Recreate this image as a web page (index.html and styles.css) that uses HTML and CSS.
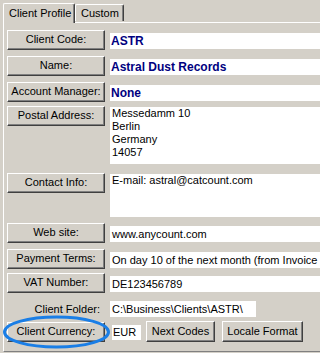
FILE: index.html
```html
<!DOCTYPE html>
<html lang="en">

<head>
    <meta charset="UTF-8" />
    <meta name="viewport" content="width=device-width, initial-scale=1" />
    <title>Client Profile</title>
    <link rel="stylesheet" href="styles.css">
</head>

<body>
    <div class="window">
        <div class="tabs">
            <div class="tab tab-active">Client Profile</div>
            <div class="tab">Custom</div>
        </div>

        <div class="panel">
            <div class="row row-26">
                <div class="label-btn">Client Code:</div>
                <div class="field field-strong">ASTR</div>
            </div>
            <div class="row row-26">
                <div class="label-btn">Name:</div>
                <div class="field field-strong">Astral Dust Records</div>
            </div>
            <div class="row row-24">
                <div class="label-btn">Account Manager:</div>
                <div class="field field-strong">None</div>
            </div>
            <div class="row row-postal">
                <div class="label-btn">Postal Address:</div>
                <div class="field field-multi field-postal">
                    Messedamm 10<br>Berlin<br>Germany<br>14057
                </div>
            </div>
            <div class="row row-contact">
                <div class="label-btn">Contact Info:</div>
                <div class="field field-multi field-contact">E-mail: astral@catcount.com</div>
            </div>
            <div class="row row-26">
                <div class="label-btn">Web site:</div>
                <div class="field">www.anycount.com</div>
            </div>
            <div class="row row-24">
                <div class="label-btn">Payment Terms:</div>
                <div class="field">On day 10 of the next month (from Invoice date)</div>
            </div>
            <div class="row row-25">
                <div class="label-btn">VAT Number:</div>
                <div class="field">DE123456789</div>
            </div>
            <div class="row row-24">
                <div class="label-plain">Client Folder:</div>
                <div class="field field-folder">C:\Business\Clients\ASTR\</div>
            </div>
            <div class="row row-last">
                <div class="label-btn label-currency">Client Currency:</div>
                <div class="field field-eur">EUR</div>
                <div class="push-btn btn-next">Next Codes</div>
                <div class="push-btn btn-locale">Locale Format</div>
            </div>
        </div>

        <svg class="highlight" width="320" height="353" viewBox="0 0 320 353">
            <ellipse cx="56.5" cy="332" rx="52" ry="15" fill="none" stroke="#1a7ee6" stroke-width="3" />
        </svg>
    </div>
</body>
</html>
```

FILE: styles.css
```css
:root {
    --face: #d4d0c8;
    --shadow: #808080;
    --dark: #404040;
    --navy: #000080;
}

* {
    margin: 0;
    padding: 0;
    box-sizing: border-box;
}

body {
    font-family: 'Liberation Sans', Arial, sans-serif;
    font-size: 11px;
    color: black;
    background-color: var(--face);
    overflow: hidden;
}

.window {
    position: relative;
    width: 320px;
    height: 353px;
    overflow: hidden;
    background-color: var(--face);
}

.tabs {
    display: flex;
    align-items: flex-end;
    height: 22px;
    padding: 2px 0 0 3px;
    position: relative;
    z-index: 1;
}

.tab {
    height: 17px;
    margin-bottom: 1px;
    padding: 0 4px 0 5px;
    border: 1px solid white;
    border-bottom: none;
    border-right-color: var(--dark);
    border-radius: 2px 2px 0 0;
    box-shadow: inset -1px 0 var(--shadow);
    line-height: 16px;
    white-space: nowrap;
    background-color: var(--face);
}

.tab-active {
    height: 20px;
    margin-bottom: -1px;
    width: 72px;
    padding: 0 0 0 5px;
    line-height: 18px;
}

.panel {
    margin-left: 3px;
    height: 330px;
    padding: 7px 0 0 3px;
    border-top: 1px solid white;
    border-left: 1px solid white;
    border-bottom: 1px solid var(--shadow);
    display: flex;
    flex-direction: column;
}

.row {
    display: flex;
    align-items: flex-start;
    flex-shrink: 0;
}

.row-24 { height: 24px; }
.row-25 { height: 25px; }
.row-26 { height: 26px; }
.row-postal { height: 67px; }
.row-contact { height: 50px; }
.row-last { height: 22px; margin-top: -1px; }

.label-btn,
.push-btn {
    flex-shrink: 0;
    height: 20px;
    border: 1px solid;
    border-color: white var(--dark) var(--dark) white;
    box-shadow: inset -1px -1px var(--shadow);
    background-color: var(--face);
    text-align: center;
    line-height: 17px;
    white-space: nowrap;
}

.label-btn {
    width: 98px;
}

.label-currency {
    margin-top: 1px;
}

.label-plain {
    width: 98px;
    padding-right: 5px;
    text-align: right;
    line-height: 20px;
    margin-top: 1px;
}

.field {
    flex: 1;
    min-width: 0;
    height: 16px;
    margin: 3px 0 0 5px;
    padding-left: 2px;
    background-color: white;
    line-height: 16px;
    white-space: nowrap;
    overflow: hidden;
}

.field-strong {
    color: var(--navy);
    font-weight: 700;
    font-size: 12px;
    padding-left: 1px;
}

.field-multi {
    margin-top: 1px;
    line-height: 13px;
}

.field-postal {
    height: 57px;
}

.field-contact {
    height: 43px;
}

.field-folder {
    flex: none;
    width: 146px;
}

.field-eur {
    flex: none;
    width: 29px;
    height: 15px;
    margin: 4px 0 0 7px;
    line-height: 15px;
    padding-left: 1px;
}

.push-btn {
    height: 21px;
    line-height: 18px;
}

.btn-next {
    width: 69px;
    margin-left: 5px;
}

.btn-locale {
    width: 81px;
    margin-left: 7px;
}

.highlight {
    position: absolute;
    left: 0;
    top: 0;
    pointer-events: none;
    z-index: 2;
}
```
